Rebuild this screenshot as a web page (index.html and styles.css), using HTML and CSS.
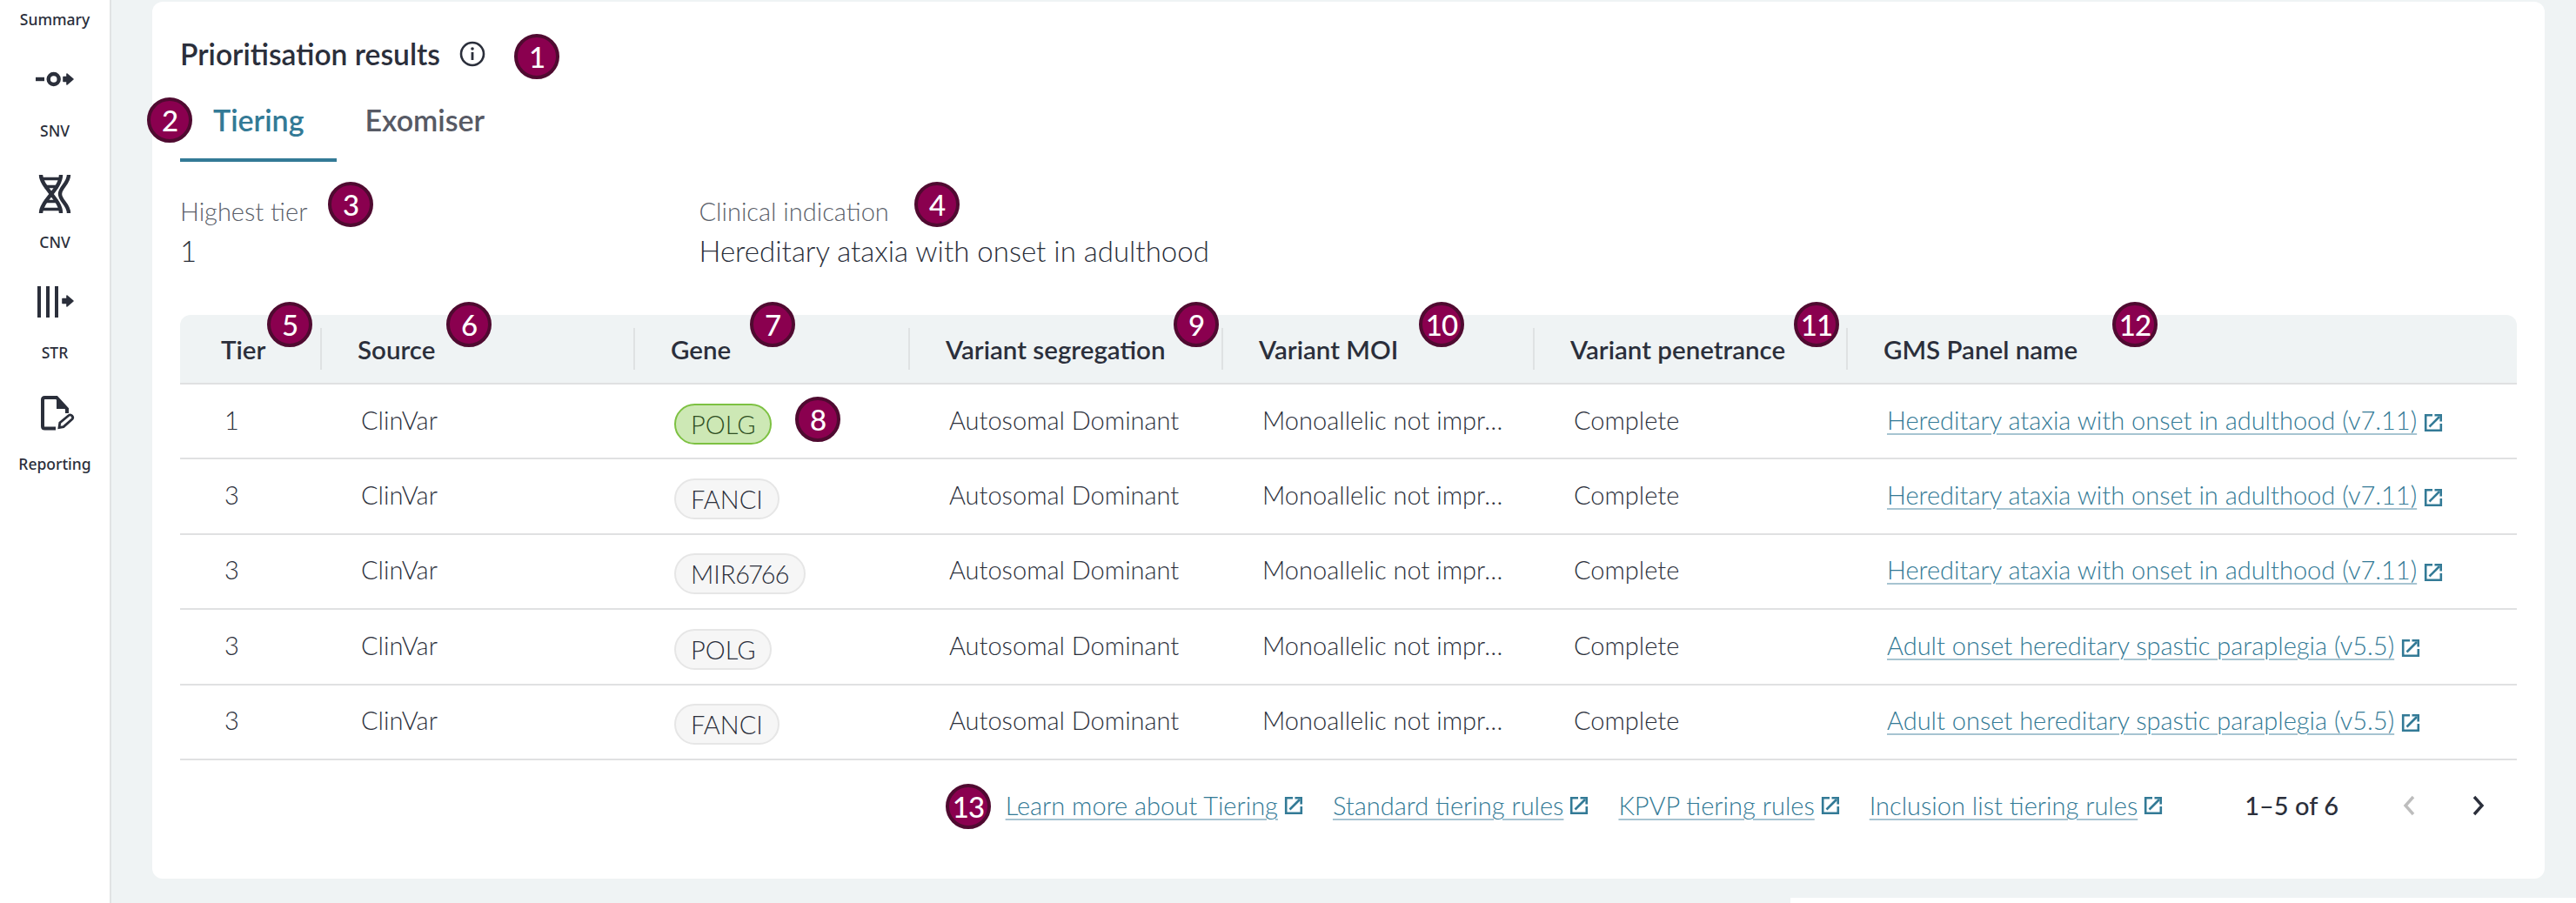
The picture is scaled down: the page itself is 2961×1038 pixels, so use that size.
FILE: index.html
```html
<!DOCTYPE html>
<html lang="en">

<head>
	<meta charset="UTF-8">
	<title>Prioritisation results</title>
	<link rel="stylesheet" href="styles.css">
</head>

<body>
	<svg class="sprite" width="0" height="0">
		<symbol id="ext" viewBox="0 0 22 22">
			<path d="M10 2.2H2.2V19.8H19.8V12" fill="none" stroke="currentColor" stroke-width="2.6" />
			<path d="M6.5 15.5L18 4" fill="none" stroke="currentColor" stroke-width="2.6" />
			<path d="M12.5 1H21V9.5H18.4V3.6H12.5Z" fill="currentColor" />
		</symbol>
	</svg>

	<div class="page">
		<nav class="sidebar">
			<div class="nav-top">Summary</div>
			<div class="nav-item">
				<svg class="nav-icon" viewBox="0 0 48 48">
					<rect x="2" y="20.8" width="10" height="4.4" />
					<circle cx="22.7" cy="23" r="6" fill="none" stroke="#2b2f3b" stroke-width="4.4" />
					<path d="M34 20.5H38V17L45 23L38 29V25.5H34Z" stroke="#2b2f3b" stroke-width="1.6" stroke-linejoin="round" />
				</svg>
				<span>SNV</span>
			</div>
			<div class="nav-item">
				<svg class="nav-icon" viewBox="0 0 48 48">
					<g fill="none" stroke="#2b2f3b" stroke-width="4.4">
						<path d="M8 5C8 19 31 33 31 49" />
						<path d="M31 5C31 21 8 35 8 49" />
						<path d="M40 5C40 15 30 19 30 27C30 35 40 39 40 49" />
						<path d="M8 9.5H31M12 18.5H28M12 35.5H28M8 44.5H31" stroke-width="3.6" />
					</g>
				</svg>
				<span>CNV</span>
			</div>
			<div class="nav-item">
				<svg class="nav-icon" viewBox="0 0 48 48">
					<rect x="4" y="6" width="4" height="36" />
					<rect x="14" y="6" width="4" height="36" />
					<rect x="24" y="6" width="4" height="36" />
					<path d="M33 20.5H38V17L45 23L38 29V25.5H33Z" stroke="#2b2f3b" stroke-width="1.6" stroke-linejoin="round" />
				</svg>
				<span>STR</span>
			</div>
			<div class="nav-item">
				<svg class="nav-icon" viewBox="0 0 48 48">
					<path d="M25 41.5H12.5Q10 41.5 10 39V8.5Q10 6 12.5 6H26L38 19V24" fill="none" stroke="#2b2f3b" stroke-width="4" />
					<path d="M26 5L39 19H26Z" />
					<path d="M29 40.5L29.8 35L40 26.5Q42 25 43.8 27Q45.6 29 44 30.8L34 39.6Z" fill="none" stroke="#2b2f3b" stroke-width="2.8" />
				</svg>
				<span>Reporting</span>
			</div>
		</nav>

		<main class="main">
			<section class="card">
				<div class="card-title">
					<h2>Prioritisation results</h2>
					<svg class="info-icon" viewBox="0 0 30 30">
						<circle cx="15" cy="15" r="13" fill="none" stroke="#2b2f3b" stroke-width="2.6" />
						<rect x="13.6" y="13" width="2.8" height="9" fill="#2b2f3b" />
						<circle cx="15" cy="9" r="1.8" fill="#2b2f3b" />
					</svg>
				</div>

				<div class="tabs">
					<a class="tab tab-active">Tiering</a>
					<a class="tab tab-second">Exomiser</a>
				</div>

				<div class="meta">
					<div>
						<div class="meta-label">Highest tier</div>
						<div class="meta-value">1</div>
					</div>
					<div>
						<div class="meta-label">Clinical indication</div>
						<div class="meta-value">Hereditary ataxia with onset in adulthood</div>
					</div>
				</div>

				<table class="results">
					<colgroup>
						<col class="col-tier">
						<col class="col-source">
						<col class="col-gene">
						<col class="col-seg">
						<col class="col-moi">
						<col class="col-pen">
						<col>
					</colgroup>
					<thead>
						<tr>
							<th><div class="th-inner">Tier</div></th>
							<th><div class="th-inner">Source</div></th>
							<th><div class="th-inner">Gene</div></th>
							<th><div class="th-inner">Variant segregation</div></th>
							<th><div class="th-inner">Variant MOI</div></th>
							<th><div class="th-inner">Variant penetrance</div></th>
							<th><div class="th-inner">GMS Panel name</div></th>
						</tr>
					</thead>
					<tbody>
						<tr>
							<td class="cell-tier">1</td>
							<td>ClinVar</td>
							<td class="cell-gene"><span class="pill pill-green">POLG</span></td>
							<td>Autosomal Dominant</td>
							<td>Monoallelic not impr…</td>
							<td>Complete</td>
							<td><a class="link">Hereditary ataxia with onset in adulthood (v7.11)</a><svg class="ext"><use href="#ext" /></svg></td>
						</tr>
						<tr>
							<td class="cell-tier">3</td>
							<td>ClinVar</td>
							<td class="cell-gene"><span class="pill">FANCI</span></td>
							<td>Autosomal Dominant</td>
							<td>Monoallelic not impr…</td>
							<td>Complete</td>
							<td><a class="link">Hereditary ataxia with onset in adulthood (v7.11)</a><svg class="ext"><use href="#ext" /></svg></td>
						</tr>
						<tr>
							<td class="cell-tier">3</td>
							<td>ClinVar</td>
							<td class="cell-gene"><span class="pill">MIR6766</span></td>
							<td>Autosomal Dominant</td>
							<td>Monoallelic not impr…</td>
							<td>Complete</td>
							<td><a class="link">Hereditary ataxia with onset in adulthood (v7.11)</a><svg class="ext"><use href="#ext" /></svg></td>
						</tr>
						<tr>
							<td class="cell-tier">3</td>
							<td>ClinVar</td>
							<td class="cell-gene"><span class="pill">POLG</span></td>
							<td>Autosomal Dominant</td>
							<td>Monoallelic not impr…</td>
							<td>Complete</td>
							<td><a class="link">Adult onset hereditary spastic paraplegia (v5.5)</a><svg class="ext"><use href="#ext" /></svg></td>
						</tr>
						<tr>
							<td class="cell-tier">3</td>
							<td>ClinVar</td>
							<td class="cell-gene"><span class="pill">FANCI</span></td>
							<td>Autosomal Dominant</td>
							<td>Monoallelic not impr…</td>
							<td>Complete</td>
							<td><a class="link">Adult onset hereditary spastic paraplegia (v5.5)</a><svg class="ext"><use href="#ext" /></svg></td>
						</tr>
					</tbody>
				</table>

				<div class="table-foot">
					<a class="link">Learn more about Tiering</a><svg class="ext"><use href="#ext" /></svg>
					<a class="link foot-link">Standard tiering rules</a><svg class="ext"><use href="#ext" /></svg>
					<a class="link foot-link">KPVP tiering rules</a><svg class="ext"><use href="#ext" /></svg>
					<a class="link foot-link">Inclusion list tiering rules</a><svg class="ext"><use href="#ext" /></svg>
					<span class="count">1–5 of 6</span>
					<button class="page-btn page-prev">
						<svg viewBox="0 0 16 24"><path d="M13 2L4 12L13 22" fill="none" stroke="currentColor" stroke-width="3.4" /></svg>
					</button>
					<button class="page-btn">
						<svg viewBox="0 0 16 24"><path d="M3 2L12 12L3 22" fill="none" stroke="currentColor" stroke-width="3.4" /></svg>
					</button>
				</div>
			</section>
			<div class="strip"></div>
		</main>

		<span class="pin pin-1">1</span>
		<span class="pin pin-2">2</span>
		<span class="pin pin-3">3</span>
		<span class="pin pin-4">4</span>
		<span class="pin pin-5">5</span>
		<span class="pin pin-6">6</span>
		<span class="pin pin-7">7</span>
		<span class="pin pin-8">8</span>
		<span class="pin pin-9">9</span>
		<span class="pin pin-10">10</span>
		<span class="pin pin-11">11</span>
		<span class="pin pin-12">12</span>
		<span class="pin pin-13">13</span>
	</div>
</body>

</html>
```

FILE: styles.css
```css
* {
	margin: 0;
	padding: 0;
	box-sizing: border-box;
}

body {
	font-family: "Lato", "Liberation Sans", sans-serif;
	font-weight: 300;
	font-size: 29px;
	color: #2b2f3b;
	background: #fff;
}

.sprite {
	position: absolute;
}

.page {
	position: relative;
	display: flex;
	width: 2961px;
	height: 1038px;
	overflow: hidden;
}

/* left rail */
.sidebar {
	flex: 0 0 128px;
	border-right: 2px solid #e1e3e4;
	font-family: "Noto Sans", sans-serif;
	font-weight: 500;
	font-size: 17.5px;
	line-height: 24px;
	text-align: center;
}

.nav-top {
	height: 22.3px;
	padding-top: 10px;
	margin-bottom: 37.7px;
}

.nav-item {
	display: flex;
	flex-direction: column;
	align-items: center;
	height: 127.7px;
	padding-top: 8px;
}

.nav-item span {
	display: block;
	margin-top: 22px;
}

.nav-icon {
	width: 48px;
	height: 48px;
	overflow: visible;
	fill: #2b2f3b;
	flex: none;
}

/* main */
.main {
	flex: 1;
	display: flex;
	flex-direction: column;
	background: #eff3f4;
}

.card {
	height: 1008px;
	margin: 2px 36px 0 47px;
	padding: 40px 32px 0;
	background: #fff;
	border-radius: 12px;
}

.strip {
	height: 6px;
	margin: 22px 0 0 1930px;
	background: #fff;
}

.card-title {
	display: flex;
	align-items: center;
	gap: 22px;
	height: 40px;
}

.card-title h2 {
	font-size: 33.6px;
	font-weight: 600;
	line-height: 40px;
}

.info-icon {
	width: 30px;
	height: 30px;
}

.tabs {
	display: flex;
	margin-top: 36px;
}

.tab {
	padding: 0 38px 24px;
	font-size: 34px;
	font-weight: 600;
	line-height: 40px;
	color: #575a65;
	border-bottom: 4px solid transparent;
}

.tab-active {
	color: #337a96;
	border-bottom-color: #337a96;
}

.tab-second {
	padding-left: 32px;
}

.meta {
	display: grid;
	grid-template-columns: 596.5px 1fr;
	margin-top: 39px;
}

.meta-label {
	font-size: 29px;
	line-height: 36px;
	color: #5b5f6a;
}

.meta-value {
	margin-top: 9px;
	font-size: 33px;
	line-height: 36px;
}

/* table */
.results {
	width: 100%;
	margin-top: 56px;
	table-layout: fixed;
	border-collapse: separate;
	border-spacing: 0;
}

.col-tier {
	width: 161px;
}

.col-source,
.col-seg,
.col-pen {
	width: 360px;
}

.col-gene {
	width: 316px;
}

.col-moi {
	width: 358px;
}

.results th {
	height: 80px;
	padding: 0;
	background: #eff3f4;
	border-bottom: 2px solid #e0e1e2;
	text-align: left;
	font-size: 29.5px;
	font-weight: 600;
}

.results th:first-child {
	border-top-left-radius: 12px;
}

.results th:last-child {
	border-top-right-radius: 12px;
}

.th-inner {
	display: flex;
	align-items: center;
	height: 48px;
	padding-left: 41px;
	border-left: 2px solid #dfe2e3;
}

.results th:first-child .th-inner {
	padding-left: 47px;
	border-left: 0;
}

.results td {
	height: 86.4px;
	padding: 0 0 4px 47px;
	border-bottom: 2px solid #e0e1e2;
	white-space: nowrap;
}

.results .cell-tier {
	padding-left: 51px;
}

.results .cell-gene {
	padding: 6px 0 0 47px;
}

.pill {
	display: inline-block;
	height: 47px;
	padding: 0 17px;
	line-height: 43px;
	font-variant-numeric: proportional-nums;
	background: #f6f6f6;
	border: 2px solid #e6e6e6;
	border-radius: 24px;
}

.pill-green {
	background: #cde8b5;
	border-color: #7dc142;
	color: #2f4f22;
}

.link {
	color: #337a96;
	text-decoration: underline;
	text-decoration-color: #a7c4d1;
	text-decoration-thickness: 2px;
	text-underline-offset: 4px;
}

.ext {
	display: inline-block;
	width: 22px;
	height: 22px;
	margin-left: 8px;
	color: #337a96;
	vertical-align: -3px;
}

/* footer of table */
.table-foot {
	display: flex;
	align-items: center;
	justify-content: flex-end;
	height: 104px;
	padding-right: 20px;
	font-size: 29px;
}

.table-foot .ext {
	margin-left: 7px;
}

.foot-link {
	margin-left: 34px;
}

.count {
	margin: 0 57px 0 94px;
	font-weight: 500;
}

.page-btn {
	display: flex;
	align-items: center;
	justify-content: center;
	width: 48px;
	height: 48px;
	border: 0;
	background: none;
	color: #2b2f3b;
}

.page-btn+.page-btn {
	margin-left: 32px;
}

.page-btn svg {
	width: 16px;
	height: 24px;
}

.page-prev {
	color: #bdbdbd;
}

/* numbered markers over the screenshot */
.pin {
	position: absolute;
	display: flex;
	align-items: center;
	justify-content: center;
	width: 52px;
	height: 52px;
	background: #8a004f;
	border: 4px solid #4f0a30;
	border-radius: 50%;
	color: #fff;
	font-size: 33px;
	font-weight: 500;
	letter-spacing: -1px;
}

.pin-1 { left: 591px; top: 39px; }
.pin-2 { left: 169px; top: 112px; }
.pin-3 { left: 377px; top: 209px; }
.pin-4 { left: 1051px; top: 209px; }
.pin-5 { left: 307px; top: 347px; }
.pin-6 { left: 513px; top: 347px; }
.pin-7 { left: 862px; top: 347px; }
.pin-8 { left: 914px; top: 456px; }
.pin-9 { left: 1349px; top: 347px; }
.pin-10 { left: 1631px; top: 347px; }
.pin-11 { left: 2062px; top: 347px; }
.pin-12 { left: 2428px; top: 347px; }
.pin-13 { left: 1087px; top: 901px; }
```
